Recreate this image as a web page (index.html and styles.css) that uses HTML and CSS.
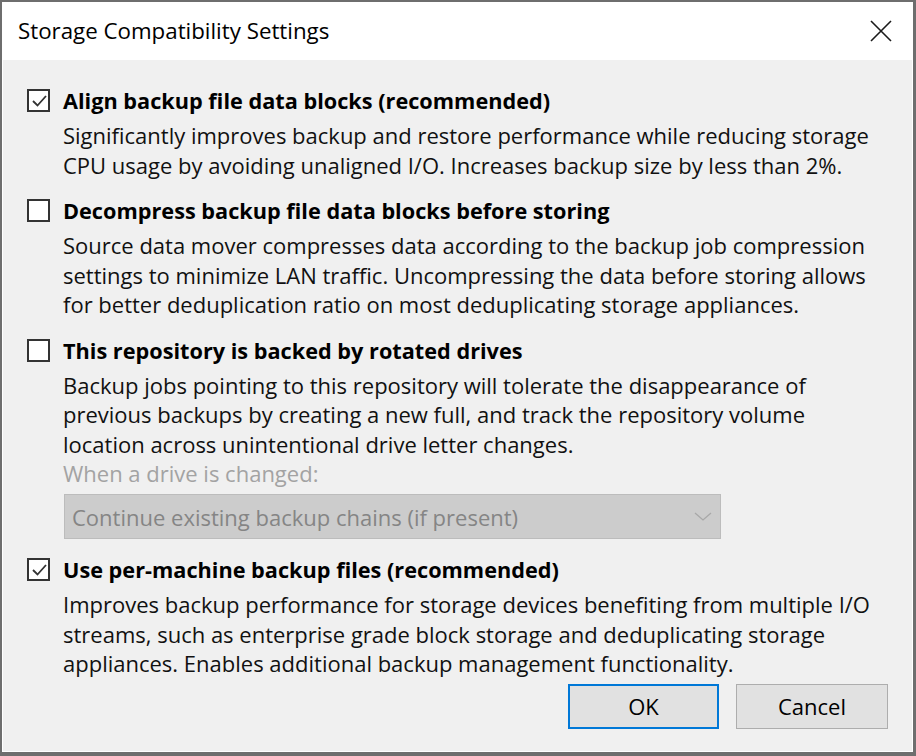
FILE: index.html
```html
<!DOCTYPE html>
<html>
<head>
<meta charset="utf-8">
<link rel="stylesheet" href="styles.css">
</head>
<body>
<div class="window">
  <div class="titlebar">
    <span class="title">Storage Compatibility Settings</span>
    <svg class="close" width="24" height="24" viewBox="0 0 24 24"><path d="M2 2 L22 22 M22 2 L2 22" stroke="#1a1a1a" stroke-width="1.6" fill="none"/></svg>
  </div>
  <div class="content">
    <div class="option">
      <div class="head">
        <span class="check checked"><svg width="18" height="18" viewBox="0 0 18 18"><path d="M3 9 L7.5 13.5 L16 4" stroke="#333" stroke-width="1.8" fill="none"/></svg></span>
        <span class="label">Align backup file data blocks (recommended)</span>
      </div>
      <p class="desc">Significantly improves backup and restore performance while reducing storage<br>CPU usage by avoiding unaligned I/O. Increases backup size by less than 2%.</p>
    </div>
    <div class="option">
      <div class="head">
        <span class="check"></span>
        <span class="label">Decompress backup file data blocks before storing</span>
      </div>
      <p class="desc">Source data mover compresses data according to the backup job compression<br>settings to minimize LAN traffic. Uncompressing the data before storing allows<br>for better deduplication ratio on most deduplicating storage appliances.</p>
    </div>
    <div class="option">
      <div class="head">
        <span class="check"></span>
        <span class="label">This repository is backed by rotated drives</span>
      </div>
      <p class="desc">Backup jobs pointing to this repository will tolerate the disappearance of<br>previous backups by creating a new full, and track the repository volume<br>location across unintentional drive letter changes.</p>
      <p class="desc disabled">When a drive is changed:</p>
      <div class="combo">
        <span>Continue existing backup chains (if present)</span>
        <svg width="18" height="10" viewBox="0 0 18 10"><path d="M1 1 L9 8 L17 1" stroke="#a8a8a8" stroke-width="1.3" fill="none"/></svg>
      </div>
    </div>
    <div class="option">
      <div class="head">
        <span class="check checked"><svg width="18" height="18" viewBox="0 0 18 18"><path d="M3 9 L7.5 13.5 L16 4" stroke="#333" stroke-width="1.8" fill="none"/></svg></span>
        <span class="label">Use per-machine backup files (recommended)</span>
      </div>
      <p class="desc">Improves backup performance for storage devices benefiting from multiple I/O<br>streams, such as enterprise grade block storage and deduplicating storage<br>appliances. Enables additional backup management functionality.</p>
    </div>
    <div class="buttons">
      <button class="btn default">OK</button>
      <button class="btn">Cancel</button>
    </div>
  </div>
</div>
</body>
</html>
```

FILE: styles.css
```css
html, body {
  margin: 0;
  padding: 0;
  width: 916px;
  height: 756px;
  overflow: hidden;
  background: #ffffff;
}
body {
  font-family: "Open Sans", "Noto Sans", sans-serif;
  font-size: 22px;
  color: #000;
}
.window {
  box-sizing: border-box;
  width: 916px;
  height: 756px;
  border: 2px solid #6e6e6e;
  border-right-width: 3px;
  border-bottom-width: 4px;
  display: flex;
  flex-direction: column;
}
.titlebar {
  height: 58px;
  background: #fff;
  display: flex;
  align-items: center;
  justify-content: space-between;
  padding: 0 20px 0 16px;
  flex-shrink: 0;
}
.title {
  font-size: 22.3px;
  color: #000;
  margin-top: -1px;
}
.close {
  margin-top: -1px;
}
.content {
  flex: 1;
  background: #f0f0f0;
  border-left: 1px solid #fff;
  border-right: 1px solid #fff;
  border-bottom: 1px solid #fff;
  padding: 26px 0 0 24px;
  display: flex;
  flex-direction: column;
  gap: 16px;
}
.option {
  display: flex;
  flex-direction: column;
}
.head {
  display: flex;
  align-items: center;
  gap: 13px;
  height: 29.5px;
}
.check {
  box-sizing: border-box;
  width: 23px;
  height: 23px;
  border: 2px solid #333;
  background: #fff;
  display: flex;
  align-items: center;
  justify-content: center;
}
.check svg {
  display: block;
}
.label {
  font-weight: 700;
  font-size: 21.7px;
  white-space: nowrap;
}
.desc {
  margin: 0;
  padding-left: 36px;
  line-height: 29.5px;
  white-space: nowrap;
  color: #111;
}
.head + .desc {
  margin-top: 5.5px;
}
.desc.disabled {
  color: #a3a3a3;
  line-height: 28px;
}
.combo {
  box-sizing: border-box;
  margin: 7px 0 0 37px;
  width: 657px;
  height: 45px;
  background: #cccccc;
  border: 1px solid #bcbcbc;
  display: flex;
  align-items: center;
  justify-content: space-between;
  padding: 0 8px 0 7px;
  color: #858585;
}
.buttons {
  display: flex;
  justify-content: flex-end;
  gap: 17px;
  padding-right: 24px;
  margin-top: -11px;
}
.btn {
  box-sizing: border-box;
  width: 152px;
  height: 45px;
  background: #e1e1e1;
  border: 1px solid #adadad;
  font-family: "Open Sans", "Noto Sans", sans-serif;
  font-size: 22px;
  color: #000;
  padding: 0;
}
.btn.default {
  border: 2px solid #0078d7;
  width: 151px;
}
```
